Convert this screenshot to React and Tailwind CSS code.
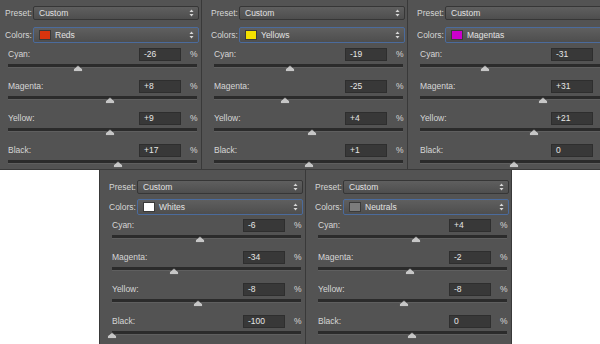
const top = [
  { name: 'Reds', swatch: '#d9340e', values: [-26, 8, 9, 17] },
  { name: 'Yellows', swatch: '#f3e000', values: [-19, -25, 4, 1] },
  { name: 'Magentas', swatch: '#cc00cc', values: [-31, 31, 21, 0] },
]

const bottom = [
  { name: 'Whites', swatch: '#ffffff', values: [-6, -34, -8, -100] },
  { name: 'Neutrals', swatch: '#7c7c7c', values: [4, -2, -8, 0] },
]

const labels = ['Cyan:', 'Magenta:', 'Yellow:', 'Black:']

function fmt(v) {
  if (v > 0) return '+' + v
  return String(v)
}

function Arrows() {
  return (
    <svg width="5" height="8" viewBox="0 0 5 8" className="shrink-0">
      <path d="M2.5 0.5 L4.5 3 L0.5 3 Z" fill="#d8d8d8" />
      <path d="M2.5 7.5 L4.5 5 L0.5 5 Z" fill="#d8d8d8" />
    </svg>
  )
}

function Thumb() {
  return (
    <svg width="10" height="7" viewBox="0 0 10 7">
      <path d="M5 0.5 L9.5 4 L9.5 6.5 L0.5 6.5 L0.5 4 Z" fill="#c6c6c6" stroke="#3a3a3a" strokeWidth="0.6" />
    </svg>
  )
}

function Select({ children, blue }) {
  return (
    <div
      className={
        'flex-1 flex items-center justify-between rounded-[2px] border bg-gradient-to-b from-[#5f5f5f] to-[#4e4e4e] pl-[5px] pr-[4px] ' +
        (blue ? 'border-[#4b6b9c] h-[16px]' : 'border-[#363636] h-[14px]')
      }
    >
      <div className="flex items-center gap-[4px] text-[#e2e2e2]">{children}</div>
      <Arrows />
    </div>
  )
}

function SliderRow({ label, value }) {
  const left = 94 + value * 0.94 - 5
  return (
    <div className="h-[32px]">
      <div className="flex items-center h-[13px]">
        <span className="flex-1 text-[#d6d6d6]">{label}</span>
        <div className="w-[42px] h-[13px] bg-[#383838] border border-[#2e2e2e] flex items-center pl-[4px] text-[#e6e6e6]">
          {fmt(value)}
        </div>
        <span className="ml-[9px] w-[7px] text-[#d6d6d6]">%</span>
      </div>
      <div className="relative mt-[3px] h-[4px] bg-[#2b2b2b] border-b border-[#5f5f5f]">
        <div className="absolute top-[1px]" style={{ left }}>
          <Thumb />
        </div>
      </div>
    </div>
  )
}

function Panel({ data, pt, gapA, gapB }) {
  return (
    <div className="w-[205px] shrink-0 h-full bg-[#535353]" style={{ paddingTop: pt }}>
      <div className="flex items-center pl-[9px] pr-[2px]">
        <span className="w-[28px] text-[#d6d6d6]">Preset:</span>
        <Select>Custom</Select>
      </div>
      <div className="flex items-center pl-[9px] pr-[2px]" style={{ marginTop: gapA }}>
        <span className="w-[28px] text-[#d6d6d6]">Colors:</span>
        <Select blue>
          <span className="w-[12px] h-[10px] border border-[#3a3a3a]" style={{ background: data.swatch }} />
          <span>{data.name}</span>
        </Select>
      </div>
      <div className="pl-[12px] pr-[4px]" style={{ marginTop: gapB }}>
        {labels.map((l, i) => (
          <SliderRow key={l} label={l} value={data.values[i]} />
        ))}
      </div>
    </div>
  )
}

export default function App() {
  return (
    <div
      className="w-[600px] h-[344px] bg-white overflow-hidden text-[8.5px] leading-none"
      style={{ fontFamily: '"Liberation Sans", Arial, sans-serif' }}
    >
      <div className="h-[170px] flex gap-[1px] bg-[#393939] ml-[-4px] w-[620px] border-b border-[#3a3a3a]">
        {top.map((p) => (
          <Panel key={p.name} data={p} pt={6} gapA={7} gapB={5} />
        ))}
      </div>
      <div className="h-[174px] flex">
        <div className="ml-[99px] flex gap-[1px] bg-[#393939] border-x border-[#393939]">
          {bottom.map((p) => (
            <Panel key={p.name} data={p} pt={10} gapA={5} gapB={4} />
          ))}
        </div>
      </div>
    </div>
  )
}
